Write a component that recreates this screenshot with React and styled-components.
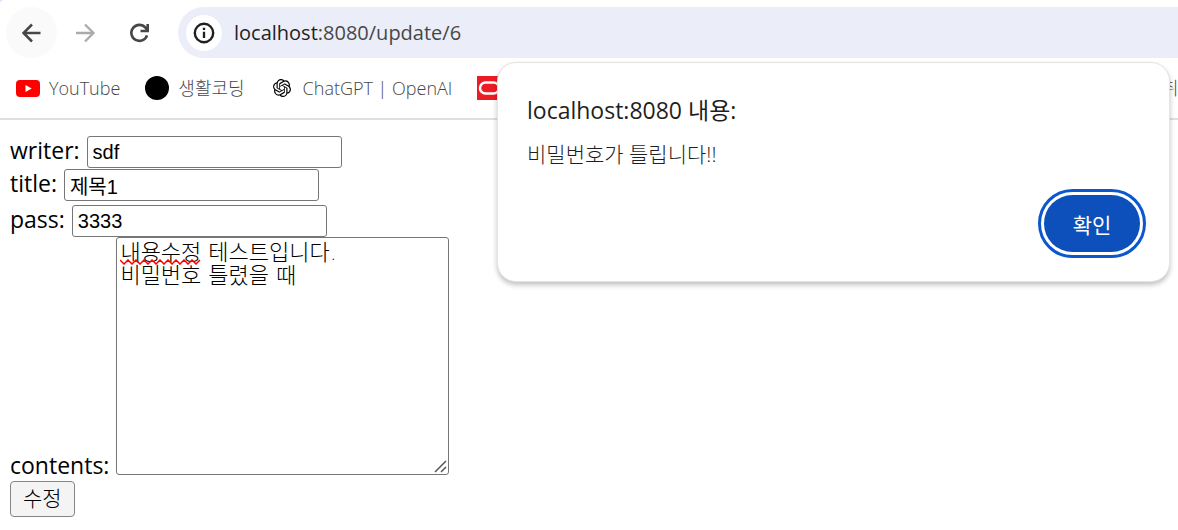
import React from 'react';
import styled, { createGlobalStyle } from 'styled-components';
import { SiOpenai } from 'react-icons/si';

const sans = '"Open Sans", "Noto Sans CJK KR", sans-serif';

const GlobalStyle = createGlobalStyle`
  * {
    box-sizing: border-box;
  }

  body {
    margin: 0;
    background: #fff;
    color: #000;
    font-family: ${sans};
    overflow: hidden;
  }
`;

const Browser = styled.div`
  position: relative;
`;

const Header = styled.header`
  background: #d3e3fd;
`;

const Chrome = styled.div`
  background: #fff;
  border-top-left-radius: 4px;
  border-bottom: 2px solid #dfdfdf;
`;

const Toolbar = styled.nav`
  display: flex;
  align-items: center;
  gap: 3px;
  padding: 7px 0 0 6px;
`;

const NavButton = styled.button`
  display: flex;
  align-items: center;
  justify-content: center;
  width: 51px;
  height: 51px;
  padding: 0;
  border: 0;
  border-radius: 50%;
  background: ${(props) => (props.$hovered ? '#fafafa' : 'transparent')};
  color: ${(props) => (props.disabled ? '#ababab' : '#474747')};
`;

const AddressBar = styled.div`
  display: flex;
  flex: 1;
  align-items: center;
  gap: 12px;
  height: 51px;
  margin-left: 10px;
  padding-left: 8px;
  border-radius: 26px 0 0 26px;
  background: #ebeef8;
`;

const SiteInfo = styled.button`
  display: flex;
  align-items: center;
  justify-content: center;
  width: 36px;
  height: 36px;
  padding: 0;
  border: 0;
  border-radius: 50%;
  background: #fff;
  color: #1f1f1f;
`;

const Address = styled.div`
  color: #474747;
  font-size: 20px;
  line-height: 28px;

  span {
    color: #1f1f1f;
  }
`;

const Bookmarks = styled.div`
  display: flex;
  align-items: center;
  gap: 25px;
  height: 60px;
  padding-left: 16px;
  overflow: hidden;
`;

const Bookmark = styled.a`
  display: flex;
  flex: none;
  align-items: center;
  gap: 9px;
  color: #474747;
  font-size: 18px;
  font-weight: 300;
  line-height: 28px;
  text-decoration: none;
  white-space: nowrap;
`;

const LastBookmark = styled(Bookmark)`
  width: 16px;
  margin-left: auto;
`;

const IconSlot = styled.span`
  display: flex;
  align-items: center;
  justify-content: center;
  width: 24px;
  height: 24px;
  color: #000;
`;

const Dot = styled.span`
  width: 24px;
  height: 24px;
  border-radius: 50%;
  background: #000;
`;

const Form = styled.form`
  display: flex;
  flex-direction: column;
  align-items: flex-start;
  padding: 16px 10px;
`;

const Row = styled.div`
  display: flex;
  align-items: ${(props) => (props.$bottom ? 'flex-end' : 'flex-start')};
  gap: 7px;
  margin-bottom: ${(props) => props.$space || 0}px;
`;

const Label = styled.label`
  font-size: 23px;
  line-height: ${(props) => (props.$tight ? 20 : 28)}px;
`;

const TextInput = styled.input`
  width: 255px;
  height: 32px;
  padding: 1px 5px;
  border: 1px solid #767676;
  border-radius: 3px;
  background: #fff;
  color: #000;
  font: 20px "Liberation Sans", "Noto Sans CJK KR", sans-serif;
  outline: 0;
`;

const ContentsBox = styled.div`
  position: relative;
  display: flex;
`;

const Contents = styled.textarea`
  width: 333px;
  height: 238px;
  padding: 3px;
  border: 1px solid #767676;
  border-radius: 3px;
  color: #000;
  font-family: "DejaVu Sans", "Noto Sans CJK KR", sans-serif;
  font-size: 22px;
  font-weight: 300;
  line-height: 23px;
  outline: 0;
  resize: none;
`;

const Squiggle = styled.svg`
  position: absolute;
  top: 22px;
  left: 4px;
`;

const Grip = styled.svg`
  position: absolute;
  right: 2px;
  bottom: 2px;
`;

const Submit = styled.button`
  height: 36px;
  margin-top: 6px;
  padding: 0 12px 2px;
  border: 1px solid #858585;
  border-radius: 4px;
  background: #f4f4f4;
  color: #000;
  font-family: ${sans};
  font-size: 21px;
  font-weight: 300;
  line-height: 30px;
`;

const Dialog = styled.div`
  position: absolute;
  top: 62px;
  right: 8px;
  width: 673px;
  padding: 30px 29px 29px;
  border: 1px solid #e4e4e4;
  border-radius: 19px;
  background: #fff;
  box-shadow: 0 3px 5px rgba(0, 0, 0, 0.24);
  color: #1f1f1f;
`;

const DialogTitle = styled.h1`
  margin: 0;
  font-size: 23px;
  font-weight: 400;
  line-height: 34px;
`;

const Message = styled.p`
  margin: 13px 0 27px;
  font-size: 21px;
  font-weight: 300;
  line-height: 28px;
`;

const Confirm = styled.button`
  display: block;
  width: 96px;
  height: 57px;
  margin-left: auto;
  padding: 0;
  border: 0;
  border-radius: 29px;
  outline: 3px solid #0b57d0;
  outline-offset: 3px;
  background: #0d50bb;
  color: #fff;
  font-family: ${sans};
  font-size: 21px;
`;

const BackIcon = () => (
  <svg width="20" height="20" viewBox="0 0 20 20" fill="none" stroke="currentColor" strokeWidth="2.5">
    <path d="M18.5 10H2M10 1.5L1.500 10l8.500 8.500" />
  </svg>
);

const ForwardIcon = () => (
  <svg width="20" height="20" viewBox="0 0 20 20" fill="none" stroke="currentColor" strokeWidth="2.3">
    <path d="M0 10h17M9 1.500L17.500 10 9 18.500" />
  </svg>
);

const ReloadIcon = () => (
  <svg width="20" height="20" viewBox="0 0 20 20" fill="none" stroke="currentColor" strokeWidth="2.6">
    <path d="M17 12.300A8 8 0 1 1 15.400 4.600L17.300 6.800M17.700 1v7H10.500" />
  </svg>
);

const InfoIcon = () => (
  <svg width="22" height="22" viewBox="0 0 22 22" fill="none" stroke="currentColor">
    <circle cx="11" cy="11" r="9.200" strokeWidth="2.400" />
    <path d="M11 9.800v6.200M11 5.800v2.200" strokeWidth="2.300" />
  </svg>
);

const YouTubeIcon = () => (
  <svg width="24" height="17" viewBox="0 0 24 17">
    <rect width="24" height="17" rx="4" fill="#f00" />
    <path d="M9.500 5v7l6.200-3.500z" fill="#fff" />
  </svg>
);

const OracleIcon = () => (
  <svg width="24" height="24" viewBox="0 0 24 24">
    <rect width="24" height="24" fill="#ed1c24" />
    <rect x="3" y="6.500" width="19" height="11" rx="5.500" fill="none" stroke="#fff" strokeWidth="2.500" />
  </svg>
);

const App = () => (
  <Browser>
    <GlobalStyle />
    <Header>
      <Chrome>
        <Toolbar>
          <NavButton type="button" aria-label="Back" $hovered>
            <BackIcon />
          </NavButton>
          <NavButton type="button" aria-label="Forward" disabled>
            <ForwardIcon />
          </NavButton>
          <NavButton type="button" aria-label="Reload">
            <ReloadIcon />
          </NavButton>
          <AddressBar>
            <SiteInfo type="button" aria-label="Site information">
              <InfoIcon />
            </SiteInfo>
            <Address>
              <span>localhost</span>
              :8080/update/6
            </Address>
          </AddressBar>
        </Toolbar>
        <Bookmarks>
          <Bookmark href="#youtube">
            <YouTubeIcon />
            YouTube
          </Bookmark>
          <Bookmark href="#coding">
            <Dot />
            생활코딩
          </Bookmark>
          <Bookmark href="#chatgpt">
            <IconSlot>
              <SiOpenai size={18} />
            </IconSlot>
            ChatGPT | OpenAI
          </Bookmark>
          <Bookmark href="#oracle" aria-label="Oracle">
            <OracleIcon />
          </Bookmark>
          <LastBookmark href="#jobs">취</LastBookmark>
        </Bookmarks>
      </Chrome>
    </Header>

    <Form onSubmit={(e) => e.preventDefault()}>
      <Row $space={1}>
        <Label htmlFor="writer">writer:</Label>
        <TextInput id="writer" defaultValue="sdf" />
      </Row>
      <Row $space={4}>
        <Label htmlFor="title">title:</Label>
        <TextInput id="title" defaultValue="제목1" />
      </Row>
      <Row>
        <Label htmlFor="pass">pass:</Label>
        <TextInput id="pass" defaultValue="3333" />
      </Row>
      <Row $bottom>
        <Label htmlFor="contents" $tight>
          contents:
        </Label>
        <ContentsBox>
          <Contents
            id="contents"
            spellCheck={false}
            defaultValue={'내용수정 테스트입니다.\n비밀번호 틀렸을 때'}
          />
          <Squiggle width="81" height="6" viewBox="0 0 81 6" fill="none" stroke="#f00" strokeWidth="1.500">
            <path d="M0 1l4 4 4-4 4 4 4-4 4 4 4-4 4 4 4-4 4 4 4-4 4 4 4-4 4 4 4-4 4 4 4-4 4 4 4-4 4 4 4-4" />
          </Squiggle>
          <Grip width="13" height="13" viewBox="0 0 13 13" stroke="#555" strokeWidth="1.500">
            <path d="M1 12L12 1M7 12l5-5" />
          </Grip>
        </ContentsBox>
      </Row>
      <Submit type="submit">수정</Submit>
    </Form>

    <Dialog role="alertdialog" aria-labelledby="dialog-title" aria-describedby="dialog-message">
      <DialogTitle id="dialog-title">localhost:8080 내용:</DialogTitle>
      <Message id="dialog-message">비밀번호가 틀립니다!!</Message>
      <Confirm type="button">확인</Confirm>
    </Dialog>
  </Browser>
);

export default App;
